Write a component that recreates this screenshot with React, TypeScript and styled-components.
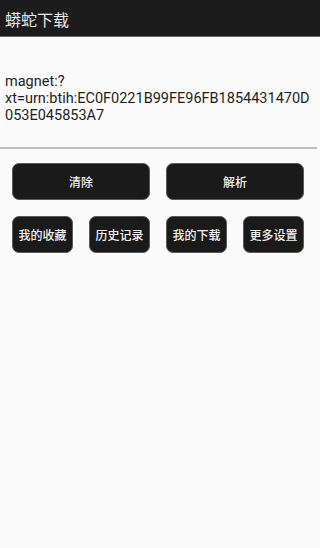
import React from "react";
import styled, { createGlobalStyle } from "styled-components";

const GlobalStyle = createGlobalStyle`
  html, body {
    margin: 0;
    padding: 0;
    background: #fafafa;
  }
  body {
    font-family: Roboto, "Noto Sans CJK SC", sans-serif;
  }
`;

const magnetLines = [
  "magnet:?",
  "xt=urn:btih:EC0F0221B99FE96FB1854431470D",
  "053E045853A7",
];

const smallButtons = ["我的收藏", "历史记录", "我的下载", "更多设置"];

export default function App() {
  return (
    <Page>
      <GlobalStyle />
      <TitleBar>
        <Title>蟒蛇下载</Title>
      </TitleBar>
      <InputArea>
        <MagnetText>
          {magnetLines.map((line) => (
            <div key={line}>{line}</div>
          ))}
        </MagnetText>
        <Underline />
      </InputArea>
      <ButtonGrid columns={2}>
        <ActionButton>清除</ActionButton>
        <ActionButton>解析</ActionButton>
      </ButtonGrid>
      <ButtonGrid columns={4}>
        {smallButtons.map((label) => (
          <ActionButton key={label}>{label}</ActionButton>
        ))}
      </ButtonGrid>
    </Page>
  );
}

const Page = styled.div`
  width: 320px;
  min-height: 548px;
  background: #fafafa;
  display: flex;
  flex-direction: column;
`;

const TitleBar = styled.header`
  height: 37px;
  background: #1c1c1c;
  border-bottom: 1px solid #6a6a6a;
  display: flex;
  align-items: center;
  padding-left: 5px;
  box-sizing: border-box;
`;

const Title = styled.h1`
  margin: 0;
  font-size: 16px;
  font-weight: 400;
  color: #e6e6e6;
  font-family: "Noto Sans CJK SC", sans-serif;
  line-height: 1;
  padding-top: 2px;
`;

const InputArea = styled.div`
  display: flex;
  flex-direction: column;
  padding-top: 36px;
`;

const MagnetText = styled.div`
  padding: 0 0 0 5px;
  font-family: Roboto, sans-serif;
  font-size: 14.5px;
  line-height: 17px;
  color: #1e1e1e;
  white-space: nowrap;
`;

const Underline = styled.div`
  height: 2px;
  margin: 23px 3px 0 0;
  background: #bdbdbd;
`;

const ButtonGrid = styled.div<{ columns: number }>`
  display: grid;
  grid-template-columns: repeat(${(p) => p.columns}, 1fr);
  gap: 16px;
  padding: 0 16px 0 12px;
  margin-top: ${(p) => (p.columns === 2 ? 14 : 16)}px;
`;

const ActionButton = styled.button`
  height: 37px;
  padding: 0;
  border: 1px solid #5a5a5a;
  border-radius: 7px;
  background: #1a1a1a;
  color: #f2f2f2;
  font-family: "Noto Sans CJK SC", sans-serif;
  font-size: 12px;
  font-weight: 500;
  display: flex;
  align-items: center;
  justify-content: center;
`;
